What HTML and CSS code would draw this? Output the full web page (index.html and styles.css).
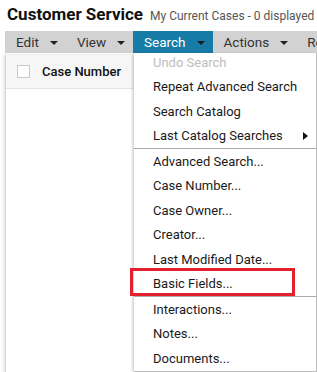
FILE: index.html
```html
<!DOCTYPE html>
<html lang="en">
<head>
    <meta charset="UTF-8">
    <meta name="viewport" content="width=device-width, initial-scale=1.0">
    <title>Customer Service</title>
    <link rel="stylesheet" href="styles.css">
</head>
<body>
    <div class="page">
        <div class="title-row">
            <h1 class="title">Customer Service</h1>
            <span class="subtitle">My Current Cases - 0 displayed</span>
        </div>

        <div class="menubar">
            <div class="menu-item">Edit <span class="caret"></span></div>
            <div class="menu-item">View <span class="caret"></span></div>
            <div class="menu-item active">Search <span class="caret"></span></div>
            <div class="menu-item">Actions <span class="caret"></span></div>
            <div class="menu-item">Reports</div>
        </div>

        <div class="grid">
            <div class="grid-head">
                <span class="checkbox"></span>
                <span class="col-title">Case Number</span>
            </div>
        </div>

        <div class="dropdown">
            <div class="group">
                <div class="option disabled">Undo Search</div>
                <div class="option">Repeat Advanced Search</div>
                <div class="option">Search Catalog</div>
                <div class="option sub">Last Catalog Searches <span class="arrow"></span></div>
            </div>
            <div class="group">
                <div class="option">Advanced Search...</div>
                <div class="option">Case Number...</div>
                <div class="option">Case Owner...</div>
                <div class="option">Creator...</div>
                <div class="option">Last Modified Date...</div>
                <div class="option marked">Basic Fields...</div>
            </div>
            <div class="group">
                <div class="option">Interactions...</div>
                <div class="option">Notes...</div>
                <div class="option">Documents...</div>
            </div>
        </div>
    </div>
</body>
</html>
```

FILE: styles.css
```css
body {
    margin: 0;
    padding: 0;
    overflow: hidden;
    background: #fff;
    font-family: Roboto, "Liberation Sans", Arial, sans-serif;
    color: #222;
}

.page {
    position: relative;
    width: 317px;
    height: 372px;
    overflow: hidden;
}

.title-row {
    display: flex;
    align-items: baseline;
    gap: 7px;
    padding: 4px 0 0 7px;
    height: 27px;
    box-sizing: border-box;
    white-space: nowrap;
}

.title {
    margin: 0;
    font-size: 17px;
    font-weight: bold;
    color: #111;
}

.subtitle {
    font-size: 12px;
    color: #555;
}

.menubar {
    display: flex;
    margin: 4px 0 0 5px;
    height: 22px;
    background: #d2d2d2;
    white-space: nowrap;
}

.menu-item {
    display: flex;
    align-items: center;
    gap: 11px;
    padding: 0 8px 0 11px;
    font-size: 13.5px;
    color: #333;
}

.menu-item.active {
    background: #167ba6;
    color: #fff;
}

.caret {
    width: 0;
    height: 0;
    border-left: 4px solid transparent;
    border-right: 4px solid transparent;
    border-top: 4px solid #222;
    margin-top: 2px;
}

.menu-item.active .caret {
    border-top-color: #1b1b1b;
}

.grid {
    margin: 2px 0 0 5px;
    height: 320px;
    border-left: 1px solid #d8d8d8;
    box-shadow: -1px 0 3px rgba(0, 0, 0, 0.15);
}

.grid-head {
    display: flex;
    align-items: center;
    gap: 12px;
    height: 33px;
    padding-left: 11px;
    background: #f6f6f6;
    border-bottom: 1px solid #e2e2e2;
}

.checkbox {
    width: 11px;
    height: 11px;
    border: 1px solid #c8c8c8;
    background: #fff;
}

.col-title {
    font-size: 13px;
    font-weight: 500;
    color: #111;
}

.dropdown {
    position: absolute;
    top: 53px;
    left: 134px;
    width: 182px;
    background: #fff;
    border-right: 1px solid #bbb;
    border-bottom: 1px solid #bbb;
    box-shadow: -1px 1px 3px rgba(0, 0, 0, 0.25);
    z-index: 2;
}

.group + .group {
    border-top: 1px solid #aaa;
}

.option {
    position: relative;
    display: flex;
    align-items: center;
    justify-content: space-between;
    height: 24.5px;
    padding: 0 8px 0 19px;
    font-size: 13px;
    color: #1a1a1a;
    white-space: nowrap;
}

.option.disabled {
    height: 19px;
    padding-bottom: 2.5px;
    color: #bdbdbd;
}

.arrow {
    width: 0;
    height: 0;
    border-top: 4px solid transparent;
    border-bottom: 4px solid transparent;
    border-left: 5px solid #111;
}

.option.marked::after {
    content: "";
    position: absolute;
    left: -4px;
    top: -4px;
    width: 159px;
    height: 22px;
    border: 3px solid #e3202b;
}
```
